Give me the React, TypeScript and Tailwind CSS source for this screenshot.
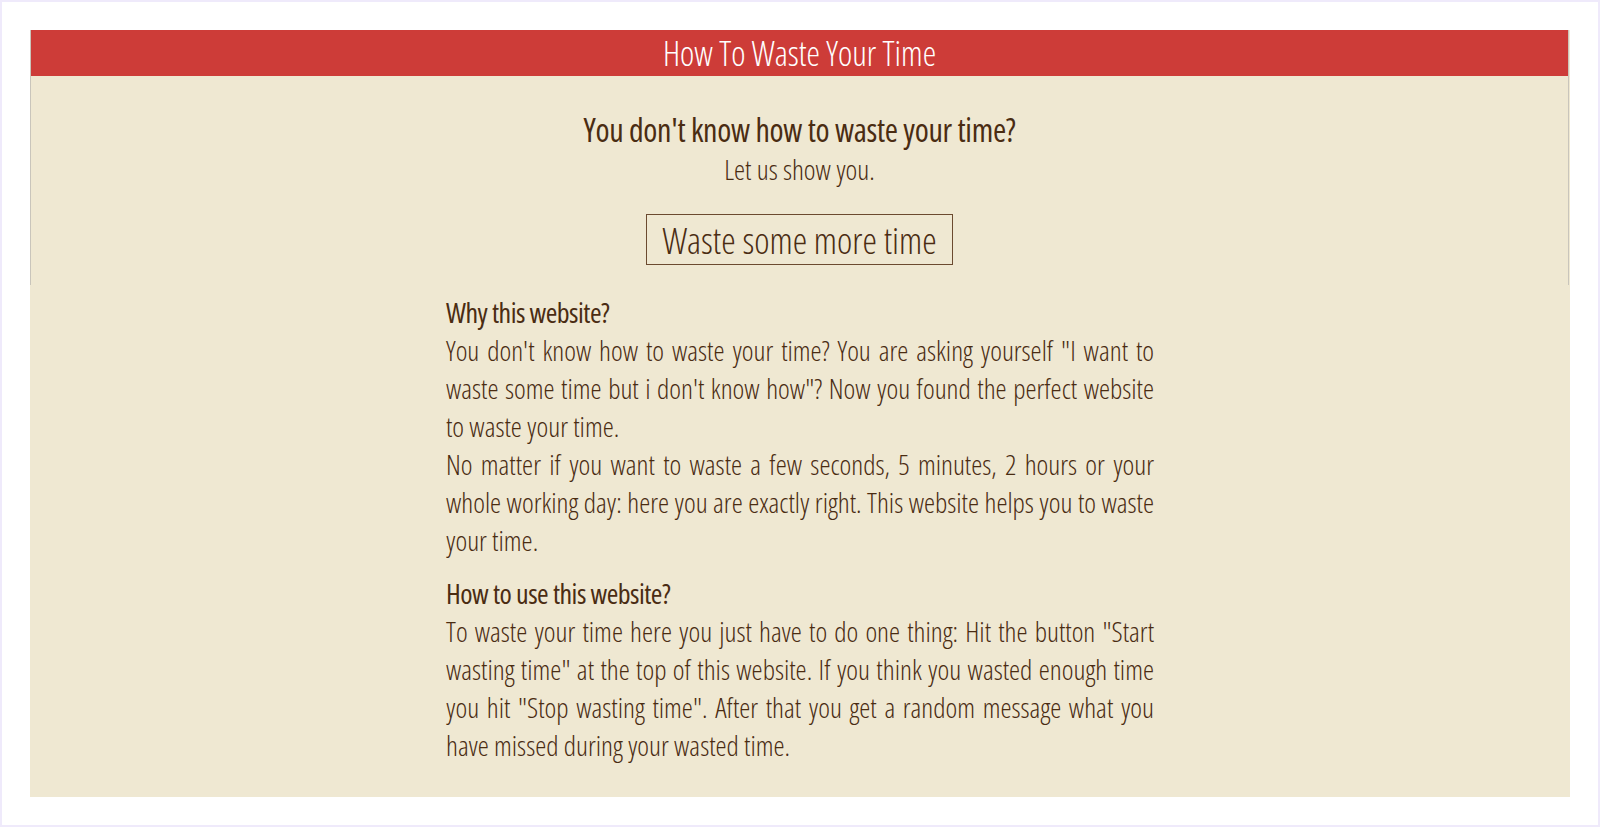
export default function App() {
  const font = { fontFamily: '"Open Sans", "Liberation Sans", sans-serif' };
  return (
    <div className="min-h-[827px] bg-[#efeafb] p-[2px]" style={font}>
      <div className="h-[823px] bg-white p-[28px]">
        <div className="h-[767px] w-[1540px] bg-[#efe8d2] text-[#4a2c12]">
          <div className="h-[255px] w-[1539px] border-x border-[#c9c5bb]">
            <div className="flex h-[46px] items-center justify-center bg-[#cd3c38] text-[34px] font-light text-white font-stretch-condensed">
              How To Waste Your Time
            </div>
            <div className="flex flex-col items-center">
              <h1 className="mt-[34px] text-[32px] font-medium leading-[40px] tracking-[-0.3px] font-stretch-condensed">
                You don't know how to waste your time?
              </h1>
              <p className="text-[28px] font-light leading-[38px] font-stretch-condensed">Let us show you.</p>
              <button className="mt-[26px] h-[51px] border border-[#6b4a30] px-[15px] text-[36.5px] font-light leading-[48px] font-stretch-condensed">
                Waste some more time
              </button>
            </div>
          </div>
          <div className="flex justify-center">
            <div className="mt-[8px] w-[708px] text-justify text-[28px] font-light leading-[38px] font-stretch-condensed">
              <h2 className="text-[28px] font-medium leading-[38px] tracking-[-0.5px]">Why this website?</h2>
              <p>
                You don't know how to waste your time? You are asking yourself "I want to waste some time but i don't know how"? Now you found the perfect website to waste your time.
              </p>
              <p>
                No matter if you want to waste a few seconds, 5 minutes, 2 hours or your whole working day: here you are exactly right. This website helps you to waste your time.
              </p>
              <h2 className="mt-[15px] text-[28px] font-medium leading-[38px] tracking-[-0.5px]">How to use this website?</h2>
              <p>
                To waste your time here you just have to do one thing: Hit the button "Start wasting time" at the top of this website. If you think you wasted enough time you hit "Stop wasting time". After that you get a random message what you have missed during your wasted time.
              </p>
            </div>
          </div>
        </div>
      </div>
    </div>
  );
}
